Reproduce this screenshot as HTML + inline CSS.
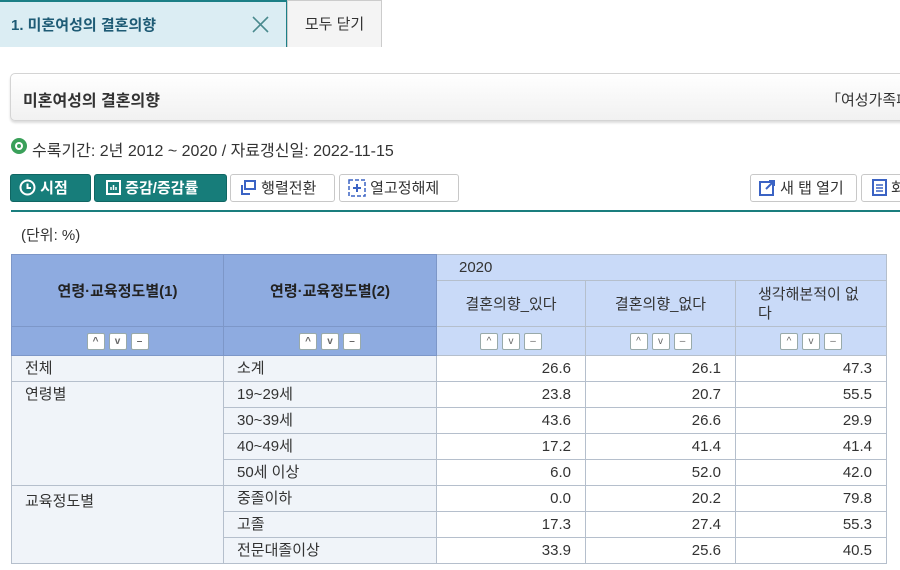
<!DOCTYPE html>
<html><head><meta charset="utf-8"><style>
*{margin:0;padding:0;box-sizing:border-box}
body{width:900px;height:570px;overflow:hidden;background:#fff;font-family:"Liberation Sans","Noto Sans CJK KR",sans-serif;color:#333;position:relative}
.a{position:absolute;white-space:nowrap}
.tab1{left:0;top:0;width:287px;height:47px;background:#dbedf3;border-top:2px solid #1c7f86;border-right:1px solid #1c7f86}
.tab1 span{position:absolute;left:11px;top:12px;font-size:15px;font-weight:bold;color:#1e5b75}
.tab2{left:287px;top:0;width:95px;height:47px;background:#f4f4f4;border:1px solid #ccc;border-bottom:none;font-size:15px;text-align:center;line-height:48px;color:#333}
.title{left:10px;top:73px;width:900px;height:48px;border:1px solid #d4d4d4;border-radius:5px;background:linear-gradient(#fff,#f1f1f1);box-shadow:0 2px 2px #ddd;overflow:hidden}
.btn{top:174px;height:28px;border-radius:3px;font-size:15px;line-height:27px;padding-left:8px}
.g{background:#177d7a;color:#fff;font-weight:bold;border:1px solid #106663}
.w{background:#fff;border:1px solid #c8c8c8;color:#333}
table{position:absolute;left:11px;top:254px;width:875px;border-collapse:collapse;table-layout:fixed;font-size:15px}
td{border:1px solid #b5bfcc;padding:0}
.h1{background:#8eabe0;font-weight:bold;text-align:center;color:#222;border-color:#7d97c8}
.h2{background:#c9daf8;text-align:center;color:#333}
.l{background:#f0f4f9;padding-left:13px;vertical-align:top;line-height:25px}
.n{text-align:right;padding-right:14px;line-height:25px}
.sb{display:inline-block;width:18px;height:17px;background:#fff;border:1px solid #9aa;border-radius:2px;margin:0 2px;vertical-align:middle;font-size:10px;line-height:15px;color:#666;text-align:center}
</style></head><body>
<div class="a tab1"><span>1. 미혼여성의 결혼의향</span>
<svg class="a" style="left:252px;top:14px" width="17" height="17"><path d="M1 1L16 16M16 1L1 16" stroke="#4a8a8e" stroke-width="1.6"/></svg></div>
<div class="a tab2">모두 닫기</div>
<div class="a title"><span class="a" style="left:12px;top:13px;font-size:16px;font-weight:bold;color:#333">미혼여성의 결혼의향</span><span class="a" style="left:815px;top:15px;font-size:15px">「여성가족패널조사」</span></div>
<div class="a" style="left:11px;top:138px;width:16px;height:16px;border-radius:50%;background:#3aa05a"></div>
<div class="a" style="left:15px;top:142px;width:8px;height:8px;border-radius:50%;background:#fff"></div>
<div class="a" style="left:17px;top:144px;width:4px;height:4px;border-radius:50%;background:#3aa05a"></div>
<div class="a" style="left:32px;top:137px;font-size:16px;color:#333">수록기간: 2년 2012 ~ 2020 / 자료갱신일: 2022-11-15</div>
<div class="a btn g" style="left:10px;width:81px"><svg width="17" height="17" style="vertical-align:-3px"><circle cx="8.5" cy="8.5" r="7" fill="none" stroke="#fff" stroke-width="2"/><path d="M8.5 4.5V9H12" stroke="#fff" stroke-width="2" fill="none"/></svg> 시점</div>
<div class="a btn g" style="left:94px;width:133px"><svg width="15" height="15" style="vertical-align:-2px;margin-left:3px"><rect x="1" y="1" width="13" height="13" fill="none" stroke="#fff" stroke-width="2"/><path d="M5 10V7M7.5 10V5M10 10V7" stroke="#fff" stroke-width="1.5"/></svg> 증감/증감률</div>
<div class="a btn w" style="left:230px;width:105px"><svg width="18" height="16" style="vertical-align:-3px"><rect x="6" y="1" width="10" height="8" fill="none" stroke="#3b63c4" stroke-width="2"/><path d="M3 5V14H11" stroke="#3b63c4" stroke-width="2" fill="none"/></svg> 행렬전환</div>
<div class="a btn w" style="left:339px;width:120px"><svg width="18" height="18" style="vertical-align:-4px"><rect x="1" y="1" width="16" height="16" fill="none" stroke="#3b63c4" stroke-width="1.5" stroke-dasharray="4 2"/><path d="M9 5V13M5 9H13" stroke="#3b63c4" stroke-width="2"/></svg> 열고정해제</div>
<div class="a btn w" style="left:750px;width:107px"><svg width="17" height="17" style="vertical-align:-3px"><rect x="1" y="3" width="13" height="13" fill="none" stroke="#3b63c4" stroke-width="2"/><path d="M7 10L15 2M10 2H15V7" stroke="#3b63c4" stroke-width="2" fill="none"/></svg> 새 탭 열기</div>
<div class="a btn w" style="left:861px;width:60px"><svg width="17" height="17" style="vertical-align:-3px"><rect x="3" y="1" width="13" height="15" fill="none" stroke="#3b63c4" stroke-width="2"/><path d="M6 6H13M6 9H13M6 12H13" stroke="#3b63c4" stroke-width="1.5"/></svg> 화</div>
<div class="a" style="left:11px;top:210px;width:889px;height:2px;background:#1a7e7e"></div>
<div class="a" style="left:21px;top:224px;font-size:15px">(단위: %)</div>
<table>
<colgroup><col style="width:212px"><col style="width:213px"><col style="width:149px"><col style="width:150px"><col style="width:151px"></colgroup>
<tr style="height:26px"><td class="h1" rowspan="2">연령·교육정도별(1)</td><td class="h1" rowspan="2">연령·교육정도별(2)</td><td class="h2" colspan="3" style="text-align:left;padding-left:22px">2020</td></tr>
<tr style="height:46px"><td class="h2">결혼의향_있다</td><td class="h2">결혼의향_없다</td><td class="h2" style="text-align:left;padding-left:22px;line-height:19px">생각해본적이 없<br>다</td></tr>
<tr style="height:29px"><td class="h1"><span class="sb">^</span><span class="sb">v</span><span class="sb">–</span></td><td class="h1"><span class="sb">^</span><span class="sb">v</span><span class="sb">–</span></td><td class="h2"><span class="sb">^</span><span class="sb">v</span><span class="sb">–</span></td><td class="h2"><span class="sb">^</span><span class="sb">v</span><span class="sb">–</span></td><td class="h2"><span class="sb">^</span><span class="sb">v</span><span class="sb">–</span></td></tr>
<tr style="height:26px"><td class="l">전체</td><td class="l">소계</td><td class="n">26.6</td><td class="n">26.1</td><td class="n">47.3</td></tr>
<tr style="height:26px"><td class="l" rowspan="4">연령별</td><td class="l">19~29세</td><td class="n">23.8</td><td class="n">20.7</td><td class="n">55.5</td></tr>
<tr style="height:26px"><td class="l">30~39세</td><td class="n">43.6</td><td class="n">26.6</td><td class="n">29.9</td></tr>
<tr style="height:26px"><td class="l">40~49세</td><td class="n">17.2</td><td class="n">41.4</td><td class="n">41.4</td></tr>
<tr style="height:26px"><td class="l">50세 이상</td><td class="n">6.0</td><td class="n">52.0</td><td class="n">42.0</td></tr>
<tr style="height:26px"><td class="l" rowspan="3" style="padding-top:3px">교육정도별</td><td class="l">중졸이하</td><td class="n">0.0</td><td class="n">20.2</td><td class="n">79.8</td></tr>
<tr style="height:26px"><td class="l">고졸</td><td class="n">17.3</td><td class="n">27.4</td><td class="n">55.3</td></tr>
<tr style="height:26px"><td class="l">전문대졸이상</td><td class="n">33.9</td><td class="n">25.6</td><td class="n">40.5</td></tr>
</table>
</body></html>
